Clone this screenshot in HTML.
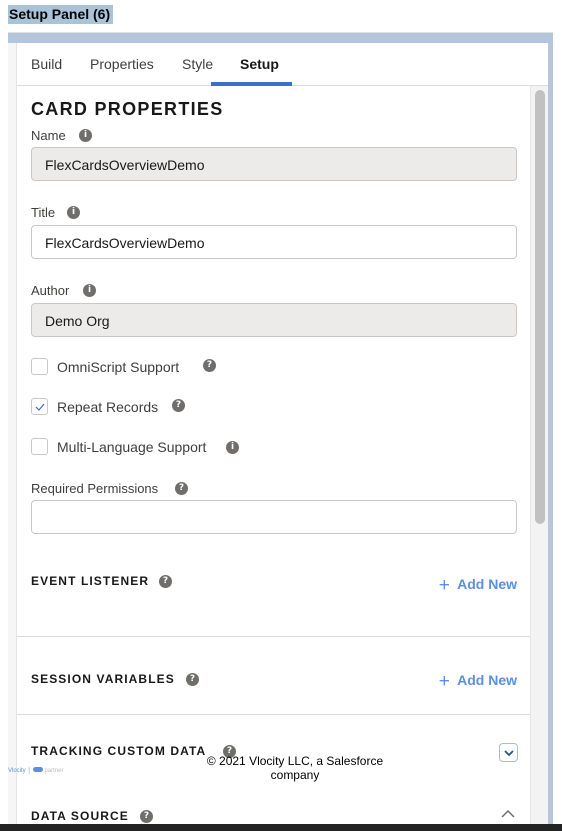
<!DOCTYPE html>
<html><head><meta charset="utf-8"><style>
*{margin:0;padding:0;box-sizing:border-box}
body{width:562px;height:831px;background:#fff;position:relative;overflow:hidden;font-family:"Liberation Sans",sans-serif;color:#181818}
.a{position:absolute}
.lbl{font-size:13px;color:#3e3e3c}
.inp{position:absolute;left:31px;width:486px;height:34px;border:1px solid #c9c9c9;border-radius:4px;font-size:14px;padding:9px 13px;color:#181818}
.dis{background:#ecebea}
.ic{position:absolute;width:13px;height:13px;border-radius:50%;background:#706e6b;color:#fff;font-size:9px;font-weight:bold;text-align:center;line-height:13px;font-family:"DejaVu Sans",sans-serif}
.cb{position:absolute;left:31px;width:17px;height:17px;border:1px solid #c9c9c9;border-radius:3px;background:#fff}
.h{position:absolute;left:31px;font-size:12px;font-weight:bold;letter-spacing:1.1px;color:#181818}
.add{position:absolute;right:45px;color:#5b8ee0;font-weight:bold;font-size:14px}
.hr{position:absolute;left:17px;width:513px;height:1px;background:#dddbda}
.tab{position:absolute;top:56px;font-size:14px;color:#3e3e3c}
</style></head><body>
<div class="a" style="left:8px;top:5px;width:105px;height:19px;background:#a9c3d9"></div>
<div class="a" style="left:9px;top:6px;font-size:14px;font-weight:bold;color:#000">Setup Panel (6)</div>
<div class="a" style="left:8px;top:32px;width:545px;height:1px;background:#e0e0e0"></div>
<div class="a" style="left:8px;top:33px;width:545px;height:10px;background:#b3c6dc"></div>
<div class="a" style="left:8px;top:43px;width:9px;height:781px;background:#f6f6f6;border-right:1px solid #e4e4e4"></div>
<div class="a" style="left:548px;top:43px;width:5px;height:781px;background:#b9c5dc"></div>
<div class="a" style="left:530px;top:86px;width:18px;height:738px;background:#f3f3f3;border-left:1px solid #e5e5e5"></div>
<div class="a" style="left:535px;top:90px;width:10px;height:434px;background:#c1c1c1;border-radius:5px"></div>
<div class="a" style="left:17px;top:43px;width:531px;height:43px;border-bottom:1px solid #dddbda"></div>
<div class="tab" style="left:31px">Build</div>
<div class="tab" style="left:90px">Properties</div>
<div class="tab" style="left:182px">Style</div>
<div class="tab" style="left:240px;font-weight:bold;color:#181818">Setup</div>
<div class="a" style="left:211px;top:82px;width:81px;height:4px;background:#3c6fc9"></div>
<div class="a" style="left:31px;top:99px;font-size:18px;font-weight:bold;letter-spacing:1.3px">CARD PROPERTIES</div>
<div class="a lbl" style="left:31px;top:128px">Name</div><div class="ic" style="left:79px;top:129px">i</div>
<div class="inp dis" style="top:147px">FlexCardsOverviewDemo</div>
<div class="a lbl" style="left:31px;top:205px">Title</div><div class="ic" style="left:67px;top:206px">i</div>
<div class="inp" style="top:225px">FlexCardsOverviewDemo</div>
<div class="a lbl" style="left:31px;top:283px">Author</div><div class="ic" style="left:83px;top:284px">i</div>
<div class="inp dis" style="top:303px">Demo Org</div>
<div class="cb" style="top:358px"></div><div class="a" style="left:57px;top:359px;font-size:14px;color:#3e3e3c">OmniScript Support</div><div class="ic" style="left:203px;top:359px">?</div>
<div class="cb" style="top:398px"><svg style="position:absolute;left:3px;top:4px" width="10" height="8"><path d="M1 4 L4 7 L9 1" stroke="#3c6fc9" stroke-width="1.2" fill="none"/></svg></div><div class="a" style="left:57px;top:399px;font-size:14px;color:#3e3e3c">Repeat Records</div><div class="ic" style="left:172px;top:399px">?</div>
<div class="cb" style="top:438px"></div><div class="a" style="left:57px;top:439px;font-size:14px;color:#3e3e3c">Multi-Language Support</div><div class="ic" style="left:226px;top:441px">i</div>
<div class="a lbl" style="left:31px;top:481px">Required Permissions</div><div class="ic" style="left:175px;top:482px">?</div>
<div class="inp" style="top:500px"></div>
<div class="h" style="top:574px">EVENT LISTENER</div><div class="ic" style="left:159px;top:575px">?</div>
<div class="add" style="top:573px"><span style="font-weight:normal;font-size:19px;position:relative;top:2px">+</span>&nbsp; Add New</div>
<div class="hr" style="top:636px"></div>
<div class="h" style="top:672px">SESSION VARIABLES</div><div class="ic" style="left:186px;top:673px">?</div>
<div class="add" style="top:669px"><span style="font-weight:normal;font-size:19px;position:relative;top:2px">+</span>&nbsp; Add New</div>
<div class="hr" style="top:714px"></div>
<div class="h" style="top:744px">TRACKING CUSTOM DATA</div><div class="ic" style="left:223px;top:745px">?</div>
<div class="a" style="left:499px;top:743px;width:19px;height:19px;border:1px solid #a6bce6;border-radius:4px"><svg style="position:absolute;left:4px;top:6px" width="10" height="7"><path d="M1 1 L5 5 L9 1" stroke="#2a4e8e" stroke-width="1.8" fill="none"/></svg></div>
<div class="a" style="left:8px;top:767px;font-size:6px;color:#5b8ee0;white-space:nowrap">Vlocity │ <span style="display:inline-block;width:10px;height:5px;background:#5b8ee0;border-radius:3px"></span> <span style="color:#bbb">partner</span></div>
<div class="a" style="left:190px;top:754px;width:210px;text-align:center;font-size:12px;color:#000;line-height:14px">© 2021 Vlocity LLC, a Salesforce company</div>
<div class="h" style="top:809px">DATA SOURCE</div><div class="ic" style="left:140px;top:810px">?</div>
<svg class="a" style="left:501px;top:810px" width="14" height="8"><path d="M1 7 L7 1 L13 7" stroke="#706e6b" stroke-width="1.5" fill="none"/></svg>
<div class="a" style="left:0;top:824px;width:562px;height:7px;background:#232323"></div>
</body></html>
